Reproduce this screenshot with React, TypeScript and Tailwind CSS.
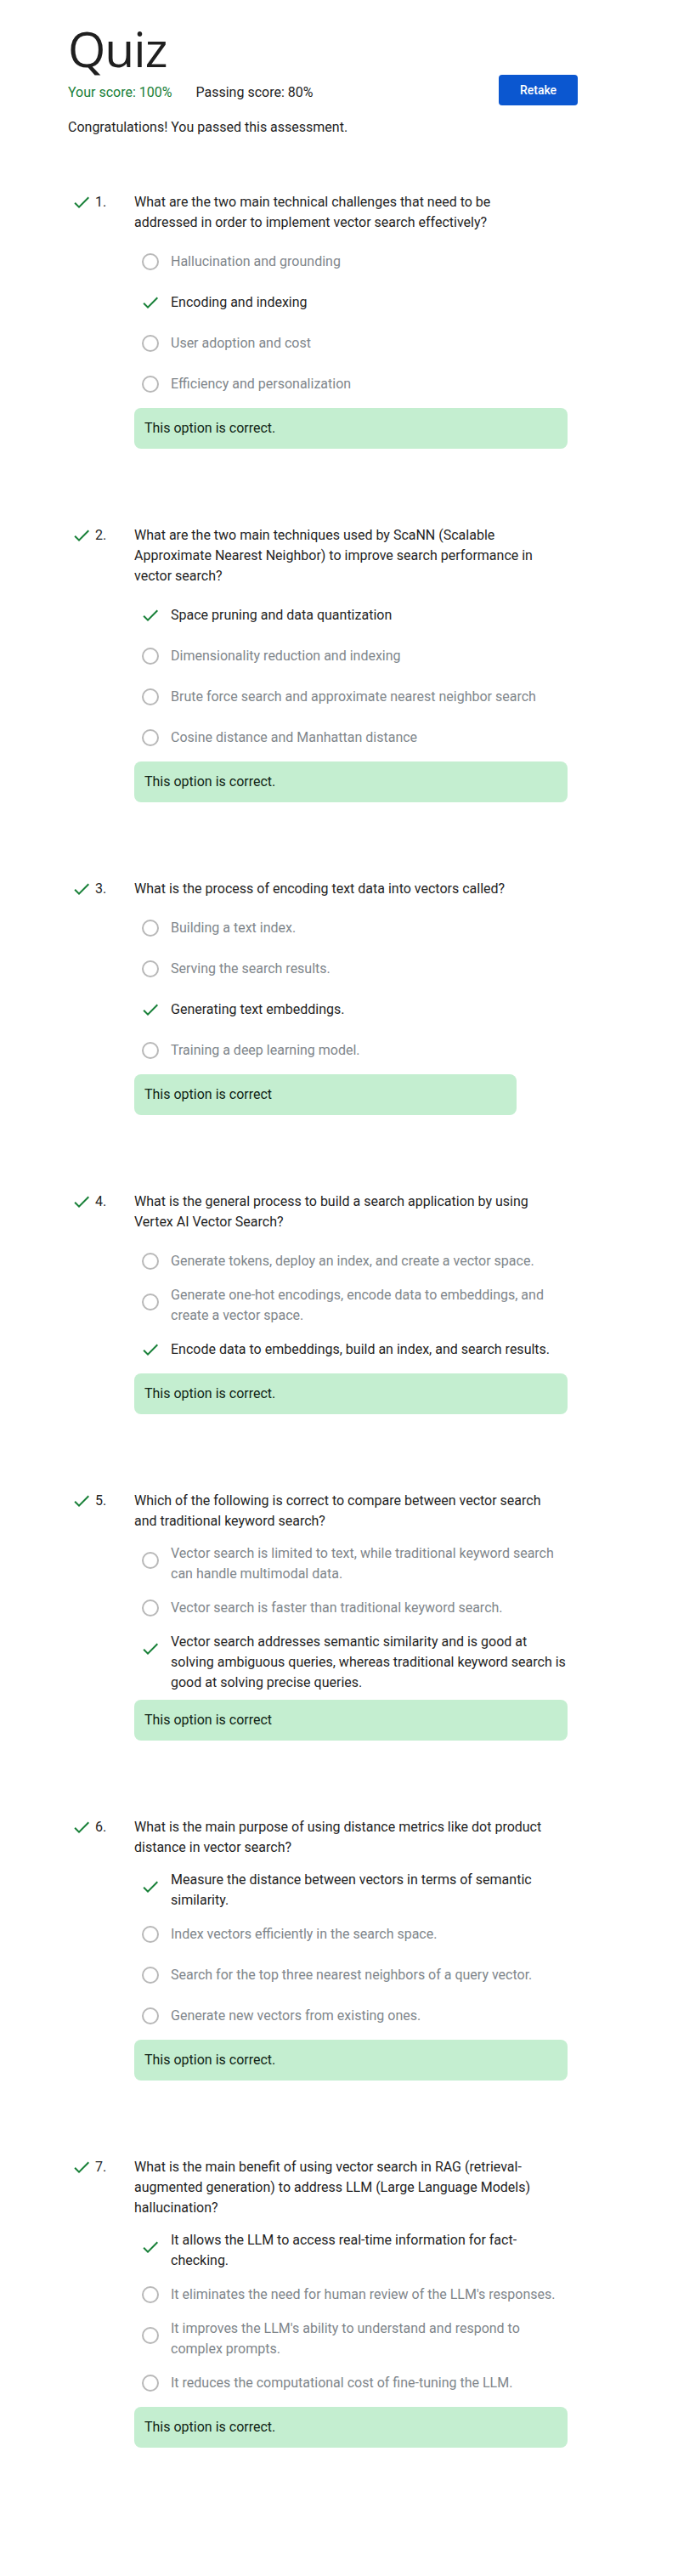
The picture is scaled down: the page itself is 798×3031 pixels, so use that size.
import React from "react";

type Option = { text: string; correct?: boolean };
type Question = { q: string; options: Option[]; feedback: string };

const questions: Question[] = [
    {
        q: "What are the two main technical challenges that need to be addressed in order to implement vector search effectively?",
        options: [
            { text: "Hallucination and grounding" },
            { text: "Encoding and indexing", correct: true },
            { text: "User adoption and cost" },
            { text: "Efficiency and personalization" },
        ],
        feedback: "This option is correct.",
    },
    {
        q: "What are the two main techniques used by ScaNN (Scalable Approximate Nearest Neighbor) to improve search performance in vector search?",
        options: [
            { text: "Space pruning and data quantization", correct: true },
            { text: "Dimensionality reduction and indexing" },
            { text: "Brute force search and approximate nearest neighbor search" },
            { text: "Cosine distance and Manhattan distance" },
        ],
        feedback: "This option is correct.",
    },
    {
        q: "What is the process of encoding text data into vectors called?",
        options: [
            { text: "Building a text index." },
            { text: "Serving the search results." },
            { text: "Generating text embeddings.", correct: true },
            { text: "Training a deep learning model." },
        ],
        feedback: "This option is correct",
    },
    {
        q: "What is the general process to build a search application by using Vertex AI Vector Search?",
        options: [
            { text: "Generate tokens, deploy an index, and create a vector space." },
            { text: "Generate one-hot encodings, encode data to embeddings, and create a vector space." },
            { text: "Encode data to embeddings, build an index, and search results.", correct: true },
        ],
        feedback: "This option is correct.",
    },
    {
        q: "Which of the following is correct to compare between vector search and traditional keyword search?",
        options: [
            { text: "Vector search is limited to text, while traditional keyword search can handle multimodal data." },
            { text: "Vector search is faster than traditional keyword search." },
            {
                text: "Vector search addresses semantic similarity and is good at solving ambiguous queries, whereas traditional keyword search is good at solving precise queries.",
                correct: true,
            },
        ],
        feedback: "This option is correct",
    },
    {
        q: "What is the main purpose of using distance metrics like dot product distance in vector search?",
        options: [
            { text: "Measure the distance between vectors in terms of semantic similarity.", correct: true },
            { text: "Index vectors efficiently in the search space." },
            { text: "Search for the top three nearest neighbors of a query vector." },
            { text: "Generate new vectors from existing ones." },
        ],
        feedback: "This option is correct.",
    },
    {
        q: "What is the main benefit of using vector search in RAG (retrieval-augmented generation) to address LLM (Large Language Models) hallucination?",
        options: [
            { text: "It allows the LLM to access real-time information for fact-checking.", correct: true },
            { text: "It eliminates the need for human review of the LLM's responses." },
            { text: "It improves the LLM's ability to understand and respond to complex prompts." },
            { text: "It reduces the computational cost of fine-tuning the LLM." },
        ],
        feedback: "This option is correct.",
    },
];

function Check() {
    return (
        <svg viewBox="0 0 24 24" className="w-6 h-6 fill-[#188038]">
            <path d="M9 16.17 4.83 12l-1.42 1.41L9 19 21 7l-1.41-1.41z" />
        </svg>
    );
}

export default function App() {
    return (
        <div className="min-h-screen bg-white text-[#1f1f1f] font-['Roboto',sans-serif]">
            <div className="w-[680px] pl-20 pt-[26px]">
                <h1 className="text-[57px] leading-[62px] font-normal font-['Open_Sans',sans-serif] tracking-[-1px]">Quiz</h1>

                <div className="flex items-center justify-between h-9">
                    <div className="flex gap-7 text-base leading-6 mt-[5px]">
                        <span className="text-[#188038]">Your score: 100%</span>
                        <span>Passing score: 80%</span>
                    </div>
                    <button className="w-[93px] h-9 rounded-[4px] bg-[#0b57d0] text-white text-sm font-medium">
                        Retake
                    </button>
                </div>

                <p className="mt-[14px] text-base leading-6">Congratulations! You passed this assessment.</p>

                <div className="mt-16 flex flex-col gap-[90px]">
                    {questions.map((question, i) => (
                        <div key={i} className="flex">
                            <div className="flex w-[78px] shrink-0 items-start">
                                <span className="ml-1"><Check /></span>
                                <span className="ml-1 text-base leading-6">{i + 1}.</span>
                            </div>
                            <div className="w-fit max-w-[510px]">
                                <p className="pr-[14px] text-base leading-6">{question.q}</p>
                                <div className="mt-3.5 flex flex-col gap-2">
                                    {question.options.map((o, j) => (
                                        <div key={j} className="flex items-start pl-[7px] min-h-10">
                                            <div className="h-10 w-6 shrink-0 flex items-center justify-center">
                                                {o.correct ? (
                                                    <Check />
                                                ) : (
                                                    <span className="block w-5 h-5 rounded-full border-2 border-[#b8b8b8]" />
                                                )}
                                            </div>
                                            <div
                                                className={
                                                    o.correct
                                                        ? "ml-3 min-h-10 flex items-center text-base leading-6 text-[#1f1f1f]"
                                                        : "ml-3 min-h-10 flex items-center text-base leading-6 text-[#80868b]"
                                                }
                                            >
                                                {o.text}
                                            </div>
                                        </div>
                                    ))}
                                    <div className="h-12 flex items-center px-3 rounded-lg bg-[#c4eed0] text-base leading-6 text-[#0f1f14]">
                                        {question.feedback}
                                    </div>
                                </div>
                            </div>
                        </div>
                    ))}
                </div>
            </div>
        </div>
    );
}
